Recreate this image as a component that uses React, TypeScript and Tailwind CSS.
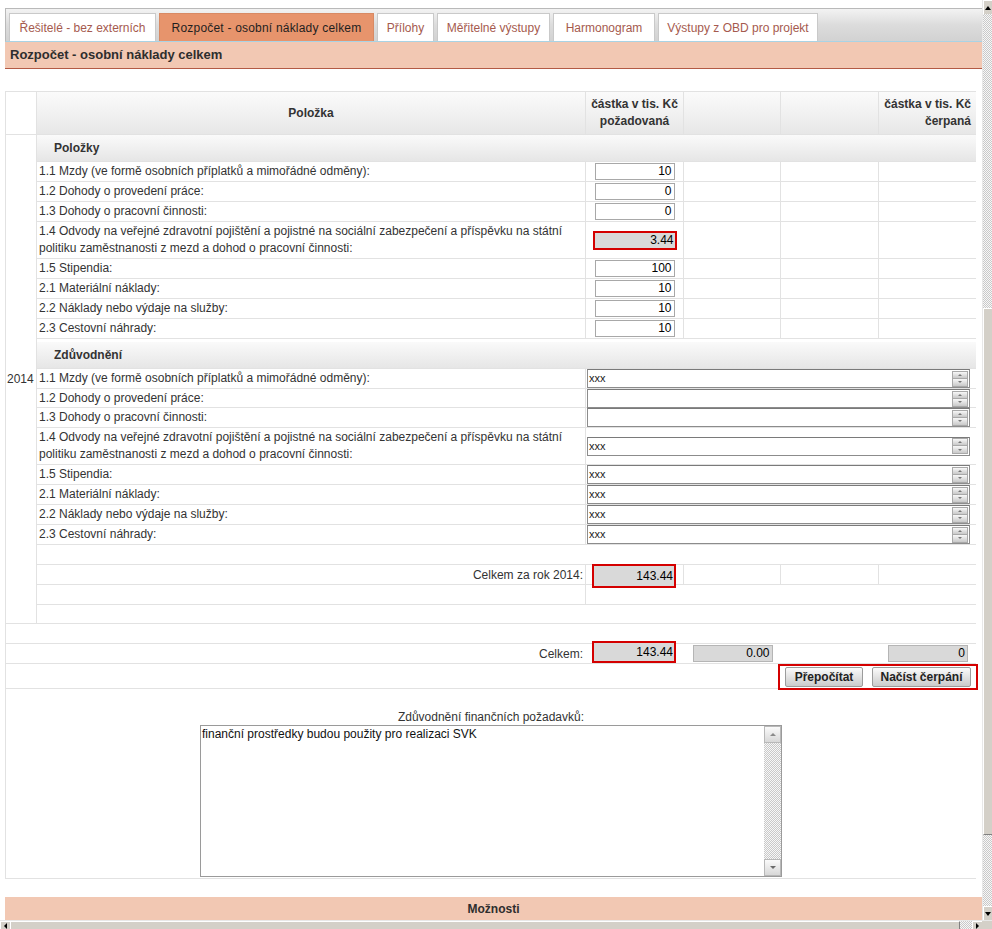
import React from 'react';

const LINE = 'border-[#e2e2e2]';
const COLS = 'grid grid-cols-[549px_98px_97px_98px_98px]';
const RED = 'border-[#d40000]';

const items = [
  '1.1 Mzdy (ve formě osobních příplatků a mimořádné odměny):',
  '1.2 Dohody o provedení práce:',
  '1.3 Dohody o pracovní činnosti:',
  '1.4 Odvody na veřejné zdravotní pojištění a pojistné na sociální zabezpečení a příspěvku na státní politiku zaměstnanosti z mezd a dohod o pracovní činnosti:',
  '1.5 Stipendia:',
  '2.1 Materiální náklady:',
  '2.2 Náklady nebo výdaje na služby:',
  '2.3 Cestovní náhrady:',
];
const amounts = ['10', '0', '0', '3.44', '100', '10', '10', '10'];
const reasons = ['xxx', '', '', 'xxx', 'xxx', 'xxx', 'xxx', 'xxx'];
const reasonHeights = ['h-[20px]', 'h-[19px]', 'h-[20px]', 'h-[37px]', 'h-[20px]', 'h-[20px]', 'h-[20px]', 'h-[20px]'];

const tabs = [
  { label: 'Řešitelé - bez externích', w: 'w-[147px]' },
  { label: 'Rozpočet - osobní náklady celkem', w: 'w-[215px]' },
  { label: 'Přílohy', w: 'w-[57px]' },
  { label: 'Měřitelné výstupy', w: 'w-[113px]' },
  { label: 'Harmonogram', w: 'w-[102px]' },
  { label: 'Výstupy z OBD pro projekt', w: 'w-[160px]' },
];

function Field({ value }: { value: string }) {
  return (
    <div className="w-[80px] h-[17px] border border-[#a8a8a8] bg-white text-right pr-[2px] leading-[15px] text-black">
      {value}
    </div>
  );
}

function GrayField({ value, red, h = 'h-[19px]' }: { value: string; red?: boolean; h?: string }) {
  return red ? (
    <div className={`w-[84px] ${h} border-2 ${RED} bg-[#d9d9d9] text-right pr-[1px] flex items-center justify-end text-black`}>
      {value}
    </div>
  ) : (
    <div className="w-[80px] h-[17px] border border-[#b5b5b5] bg-[#d9d9d9] text-right pr-[2px] leading-[15px] text-black">
      {value}
    </div>
  );
}

function SpinBtns() {
  return (
    <div className="flex flex-col w-[16px] h-[16px] shrink-0">
      <div className="h-[8px] border border-[#a9a9a9] bg-gradient-to-b from-[#f8f8f8] to-[#c9c9c9] flex items-center justify-center">
        <span className="w-0 h-0 border-x-[2px] border-x-transparent border-b-[2px] border-b-[#777]" />
      </div>
      <div className="h-[8px] border border-t-0 border-[#a9a9a9] bg-gradient-to-b from-[#f8f8f8] to-[#c9c9c9] flex items-center justify-center">
        <span className="w-0 h-0 border-x-[2px] border-x-transparent border-t-[2px] border-t-[#777]" />
      </div>
    </div>
  );
}

function ReasonBox({ value }: { value: string }) {
  return (
    <div className="ml-px w-[383px] h-[19px] border border-[#8c8c8c] border-t-[#7a7a7a] bg-white flex items-center justify-between pl-[1px] pr-[1px]">
      <span className="text-[11px] text-[#222] leading-none">{value}</span>
      <SpinBtns />
    </div>
  );
}

function SectionHead({ label }: { label: string }) {
  return (
    <div className={`h-[27px] border-b ${LINE} bg-gradient-to-b from-[#fafafa] to-[#e6e6e6] pl-[17px] flex items-center font-bold text-[#333]`}>
      {label}
    </div>
  );
}

const checker =
  'bg-[repeating-conic-gradient(#c9c9c9_0_25%,#f7f7f7_0_50%)] bg-[length:2px_2px]';

function VScroll() {
  return (
    <div className={`w-[10px] h-[920px] flex flex-col border-l border-[#e8e8e8] ${checker}`}>
      <div className="h-[14px] bg-[#d4d0c8] border-t border-l border-white flex items-center justify-center">
        <span className="w-0 h-0 border-x-[3px] border-x-transparent border-b-[4px] border-b-black" />
      </div>
      <div className="h-[294px]" />
      <div className="h-[527px] bg-[#d4d0c8] border-t border-l border-white border-b border-b-[#808080]" />
      <div className="flex-1" />
      <div className="h-[14px] bg-[#d4d0c8] border-t border-l border-white flex items-center justify-center">
        <span className="w-0 h-0 border-x-[3px] border-x-transparent border-t-[4px] border-t-black" />
      </div>
    </div>
  );
}

function HScroll() {
  return (
    <div className="h-[9px] flex border-t border-[#e8e8e8]">
      <div className="w-[10px] bg-[#d4d0c8] border-l border-t border-white flex items-center justify-center">
        <span className="w-0 h-0 border-y-[3px] border-y-transparent border-r-[3px] border-r-black" />
      </div>
      <div className="w-[950px] bg-[#d4d0c8] border-l border-t border-white border-r border-r-[#808080]" />
      <div className={`w-[12px] ${checker}`} />
      <div className="w-[10px] bg-[#d4d0c8] border-l border-t border-white flex items-center justify-center">
        <span className="w-0 h-0 border-y-[3px] border-y-transparent border-l-[3px] border-l-black" />
      </div>
      <div className="w-[10px] bg-[#d4d0c8]" />
    </div>
  );
}

export default function App() {
  return (
    <div className="w-[992px] h-[929px] overflow-hidden bg-white flex flex-col font-['Liberation_Sans',Arial,sans-serif] text-[12px] text-[#333]">
      <div className="flex h-[920px]">
        <div className="w-[982px] pt-[8px]">
          {/* tabs */}
          <div className="ml-[5px] w-[977px] h-[34px] border-t border-l border-[#b9b9b9] border-b-[1px] border-b-[#a9d3e4] bg-gradient-to-b from-[#f3f3f3] via-[#dcdcdc] to-[#d2d2d2] flex items-end pl-[3px] gap-[3px]">
            {tabs.map((t, i) => (
              <div
                key={t.label}
                className={`${t.w} h-[28px] flex items-center justify-center whitespace-nowrap border border-b-0 ${
                  i === 1
                    ? 'bg-[#e7946c] border-[#d88a64] text-[#1f1f1f] tracking-[0.2px]'
                    : 'bg-white border-[#c9c9c9] text-[#a55a4e]'
                }`}
              >
                {t.label}
              </div>
            ))}
          </div>
          {/* page header */}
          <div className="ml-[5px] w-[977px] h-[27px] bg-[#f2c8b3] border-b border-[#b35a45] pl-[5px] flex items-center font-bold text-[13px] text-[#2e2e2e]">
            Rozpočet - osobní náklady celkem
          </div>

          <div className="h-[22px]" />

          {/* table */}
          <div className={`ml-[5px] w-[971px] border-t border-l ${LINE}`}>
            {/* header row */}
            <div className={`flex h-[43px] border-b ${LINE}`}>
              <div className="w-[31px]" />
              <div className={`w-[940px] border-l ${LINE} ${COLS} bg-gradient-to-b from-[#fbfbfb] to-[#e7e7e7] font-bold text-[#333] leading-[17px]`}>
                <div className={`border-r ${LINE} flex items-center justify-center`}>Položka</div>
                <div className={`border-r ${LINE} flex items-center justify-center text-center`}>
                  částka v tis. Kč
                  <br />
                  požadovaná
                </div>
                <div className={`border-r ${LINE}`} />
                <div className={`border-r ${LINE}`} />
                <div className="flex items-center justify-end text-right pr-[6px]">
                  částka v tis. Kč
                  <br />
                  čerpaná
                </div>
              </div>
            </div>

            {/* year block */}
            <div className={`flex border-b ${LINE}`}>
              <div className="w-[31px] flex items-center pl-px text-[#333]">2014</div>
              <div className={`w-[940px] border-l ${LINE}`}>
                <SectionHead label="Položky" />
                {items.map((label, i) => (
                  <div key={label} className={`${COLS} ${i === 3 ? 'h-[37px]' : 'h-[20px]'} border-b ${LINE}`}>
                    <div className={`border-r ${LINE} pl-[2px] flex items-center leading-[17px]`}>
                      <span>{label}</span>
                    </div>
                    <div className={`border-r ${LINE} flex items-center justify-center`}>
                      {i === 3 ? <GrayField value={amounts[i]} red /> : <Field value={amounts[i]} />}
                    </div>
                    <div className={`border-r ${LINE}`} />
                    <div className={`border-r ${LINE}`} />
                    <div />
                  </div>
                ))}
                <div className="h-[3px]" />
                <SectionHead label="Zdůvodnění" />
                {items.map((label, i) => (
                  <div key={'r' + label} className={`grid grid-cols-[549px_391px] ${reasonHeights[i]} border-b ${LINE}`}>
                    <div className={`border-r ${LINE} pl-[2px] flex items-center leading-[17px]`}>
                      <span>{label}</span>
                    </div>
                    <div className="flex items-center">
                      <ReasonBox value={reasons[i]} />
                    </div>
                  </div>
                ))}
                <div className={`h-[20px] border-b ${LINE}`} />
                <div className={`${COLS} h-[20px] border-b ${LINE}`}>
                  <div className={`border-r ${LINE} flex items-center justify-end pr-[2px]`}>Celkem za rok 2014:</div>
                  <div className={`border-r ${LINE} flex items-center justify-center relative`}>
                    <div className="absolute left-[6px] top-[-1px]">
                      <GrayField value="143.44" red h="h-[24px]" />
                    </div>
                  </div>
                  <div className={`border-r ${LINE}`} />
                  <div className={`border-r ${LINE}`} />
                  <div />
                </div>
                <div className={`${COLS} h-[20px] border-b ${LINE}`}>
                  <div className={`border-r ${LINE}`} />
                </div>
                <div className="h-[18px]" />
              </div>
            </div>

            {/* totals */}
            <div className={`h-[20px] border-b ${LINE}`} />
            <div className={`grid grid-cols-[580px_98px_97px_98px_98px] h-[20px] border-b ${LINE}`}>
              <div className="flex items-center justify-end pr-[3px]">Celkem:</div>
              <div className="flex items-center relative">
                <div className="absolute left-[6px] top-[-3px]">
                  <GrayField value="143.44" red h="h-[22px]" />
                </div>
              </div>
              <div className="flex items-center justify-center">
                <GrayField value="0.00" />
              </div>
              <div />
              <div className="flex items-center justify-center">
                <GrayField value="0" />
              </div>
            </div>
            <div className={`h-[25px] border-b ${LINE} flex justify-end`}>
              <div className={`w-[200px] h-[26px] -mr-[2px] border-2 ${RED} flex items-center gap-[9px] pl-[5px]`}>
                <button className="w-[78px] h-[20px] border border-[#9c9c9c] rounded-[2px] bg-gradient-to-b from-[#fbfbfb] to-[#cbcbcb] font-bold text-[#222]">
                  Přepočítat
                </button>
                <button className="w-[99px] h-[20px] border border-[#9c9c9c] rounded-[2px] bg-gradient-to-b from-[#fbfbfb] to-[#cbcbcb] font-bold text-[#222]">
                  Načíst čerpání
                </button>
              </div>
            </div>

            {/* justification */}
            <div className={`h-[190px] border-b ${LINE} flex flex-col items-center pt-[21px]`}>
              <div className="leading-[14px] h-[15px]">Zdůvodnění finančních požadavků:</div>
              <div className="w-[582px] h-[152px] border border-[#9a9a9a] flex">
                <div className="flex-1 pl-px pt-px leading-[14px] text-[#111]">
                  finanční prostředky budou použity pro realizaci SVK
                </div>
                <div className={`w-[17px] flex flex-col ${checker}`}>
                  <div className="h-[17px] border border-[#b8b8b8] bg-gradient-to-b from-[#fafafa] to-[#d8d8d8] flex items-center justify-center">
                    <span className="w-0 h-0 border-x-[3px] border-x-transparent border-b-[3px] border-b-[#8a8a8a]" />
                  </div>
                  <div className="flex-1" />
                  <div className="h-[17px] border border-[#b8b8b8] bg-gradient-to-b from-[#fafafa] to-[#d8d8d8] flex items-center justify-center">
                    <span className="w-0 h-0 border-x-[3px] border-x-transparent border-t-[3px] border-t-[#6b6b6b]" />
                  </div>
                </div>
              </div>
            </div>
          </div>

          <div className="h-[18px]" />
          <div className="ml-[5px] w-[977px] h-[24px] bg-[#f2c8b3] border-b border-[#b35a45] flex items-center justify-center font-bold text-[#2e2e2e]">
            Možnosti
          </div>
        </div>
        <VScroll />
      </div>
      <HScroll />
    </div>
  );
}
